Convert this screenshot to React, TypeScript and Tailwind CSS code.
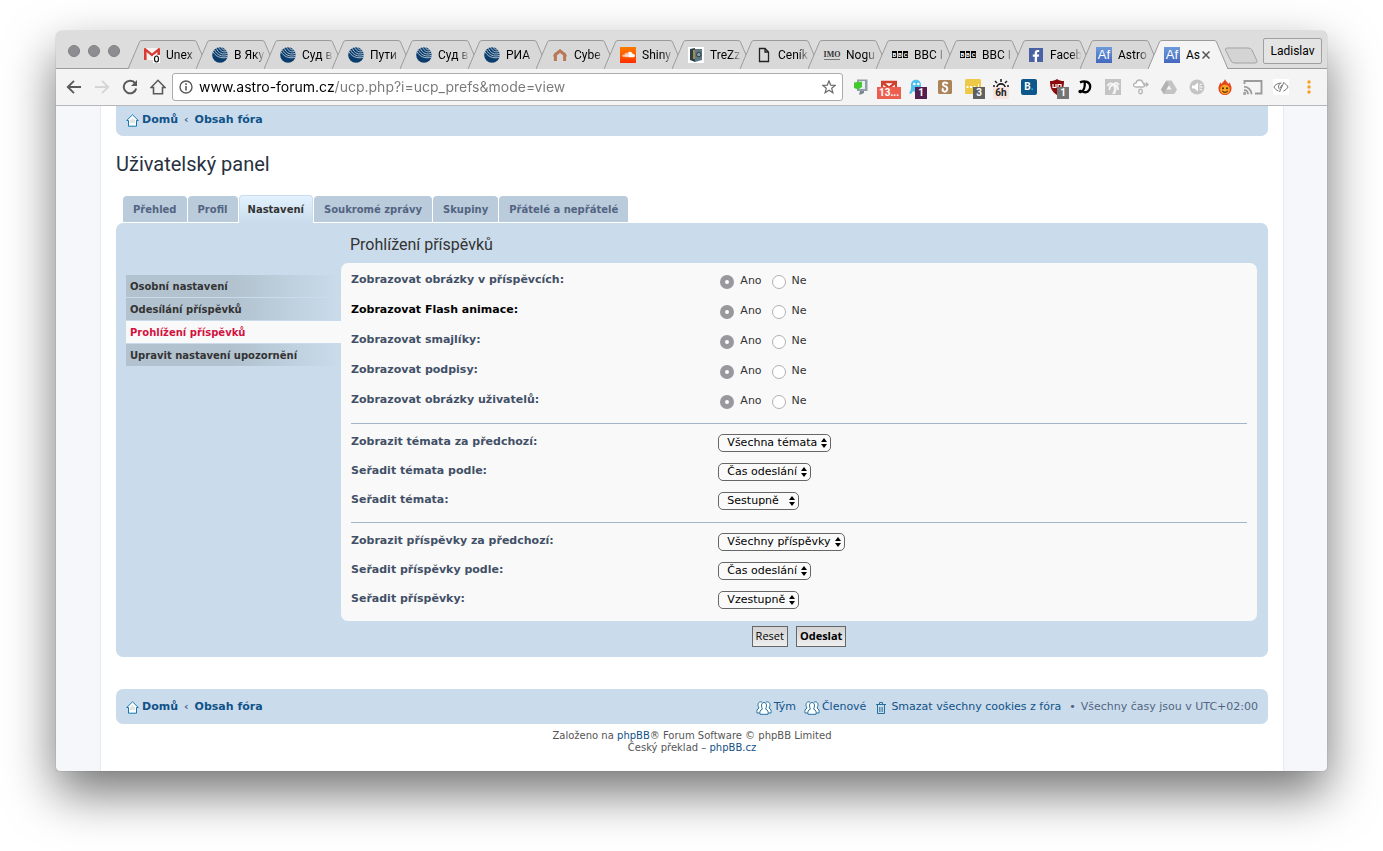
import { useState } from 'react';
import type { ReactNode } from 'react';
import clsx from 'clsx';
import { FaFacebookF, FaSoundcloud } from 'react-icons/fa';

// ---------- favicons ----------

const GmailIcon = () => (
  <svg viewBox="0 0 16 16" className="size-4">
    <rect x="0" y="1" width="16" height="12" rx="1" fill="#f4f1f1" />
    <path d="M0 2.2 L0 13 H2.6 V5 L8 9.6 L13.4 5 V13 H16 V2.2 C16 1 14.8 .8 14 1.4 L8 6.4 L2 1.4 C1.2 .8 0 1 0 2.2Z" fill="#d93a34" />
    <rect x="9" y="8" width="7" height="8" fill="#fff" />
    <ellipse cx="12.5" cy="12" rx="2" ry="3" fill="none" stroke="#111" strokeWidth="1.2" />
  </svg>
);

const RiaIcon = () => (
  <svg viewBox="0 0 16 16" className="size-4">
    <circle cx="8" cy="8" r="7.8" fill="#0a3c6e" />
    <g fill="none" stroke="#d8dde2" strokeWidth=".8">
      <path d="M1 4.6 C3 9 9 12.4 16 10" />
      <path d="M2.4 2.8 C5 8 10 10.4 16 8.2" />
      <path d="M4.2 1.2 C6.5 6.4 11 8.4 16 6" />
      <path d="M6.4 0 C8.4 4.6 12 6 15.4 4" />
      <path d="M9 0 C10 2.8 12.6 3.6 14.6 2.4" />
    </g>
  </svg>
);

const ArchIcon = () => (
  <svg viewBox="0 0 16 16" className="size-4">
    <path d="M3.4 14 V7.6 L8 4 L12.6 7.6 V14" fill="none" stroke="#b97856" strokeWidth="3" />
    <path d="M1.6 9.4 L8 3.8 L14.4 9.4" fill="none" stroke="#b97856" strokeWidth="2" />
  </svg>
);

const SoundcloudIcon = () => (
  <span className="flex size-4 items-center justify-center bg-linear-to-b from-[#ff7a00] to-[#ff2a00] text-white">
    <FaSoundcloud size={13} />
  </span>
);

const SafeIcon = () => (
  <svg viewBox="0 0 16 16" className="size-4">
    <rect width="16" height="16" fill="#fff" />
    <path d="M2 2 L7 1 V15 L2 13Z" fill="#2d4048" />
    <path d="M7 2 H14 V13 L7 15Z" fill="#5f7883" />
    <path d="M6 3 V12" stroke="#d7ad4c" strokeWidth="1.4" />
    <circle cx="10.8" cy="7.6" r="2.2" fill="#8ba5ae" stroke="#26363c" />
  </svg>
);

const FileIcon = () => (
  <svg viewBox="0 0 16 16" className="size-4">
    <path d="M3.5 1.5 H9 L12.5 5 V14.5 H3.5Z M9 1.5 V5 H12.5" fill="none" stroke="#222" strokeWidth="1.3" />
  </svg>
);

const ImoIcon = () => (
  <span className="flex w-4 justify-center border-b border-[#777] font-['Liberation_Serif',serif] text-[8px] leading-[9px] font-bold text-[#333]">
    IMO
  </span>
);

const BbcIcon = () => (
  <span className="flex w-4 gap-px">
    {['B', 'B', 'C'].map((letter, i) => (
      <span key={i} className="flex-1 bg-black text-center text-[6px] leading-[7px] font-bold text-white">
        {letter}
      </span>
    ))}
  </span>
);

const FacebookIcon = () => (
  <span className="flex size-[14px] items-end justify-end bg-[#4862a3] pr-px text-white">
    <FaFacebookF size={12} />
  </span>
);

const AfIcon = () => (
  <span className="flex size-4 items-center justify-center bg-linear-to-b from-[#6e9bdc] to-[#4467bd] font-['Liberation_Sans',sans-serif] text-[13px] leading-4 text-white">
    Af
  </span>
);

const browserTabs: { title: string; icon: ReactNode }[] = [
  { title: 'Unex', icon: <GmailIcon /> },
  { title: 'В Яку', icon: <RiaIcon /> },
  { title: 'Суд в', icon: <RiaIcon /> },
  { title: 'Пути', icon: <RiaIcon /> },
  { title: 'Суд в', icon: <RiaIcon /> },
  { title: 'РИА', icon: <RiaIcon /> },
  { title: 'Cybe', icon: <ArchIcon /> },
  { title: 'Shiny', icon: <SoundcloudIcon /> },
  { title: 'TreZz', icon: <SafeIcon /> },
  { title: 'Ceník', icon: <FileIcon /> },
  { title: 'Nogu', icon: <ImoIcon /> },
  { title: 'BBC I', icon: <BbcIcon /> },
  { title: 'BBC I', icon: <BbcIcon /> },
  { title: 'Faceb', icon: <FacebookIcon /> },
  { title: 'Astro', icon: <AfIcon /> },
  { title: 'As', icon: <AfIcon /> },
];

const BrowserTab = ({ title, icon, active }: { title: string; icon: ReactNode; active: boolean }) => (
  <button
    type="button"
    className={clsx('relative -ml-3 flex h-[29px] min-w-0 flex-1 items-center pr-[6px] pl-4 first:ml-0', active && 'z-10')}
  >
    <svg viewBox="0 0 80 29" preserveAspectRatio="none" className="absolute inset-0 h-full w-full">
      <path
        d="M0 29 L11.5 2 Q12 .5 14 .5 H66 Q68 .5 68.5 2 L80 29"
        fill={active ? '#f4f4f4' : '#d8d8d8'}
        stroke="#9b9b9b"
      />
    </svg>
    <span className="relative flex w-4 shrink-0 justify-center">{icon}</span>
    <span
      className={clsx(
        'relative ml-[6px] min-w-0 flex-1 text-left text-xs leading-4 whitespace-nowrap text-black',
        !active && 'mask-[linear-gradient(90deg,#000_56%,transparent_88%)]'
      )}
    >
      {title}
    </span>
    {active && (
      <svg viewBox="0 0 8 8" className="relative mr-3 size-2 shrink-0">
        <path d="M.5 .5 L7.5 7.5 M7.5 .5 L.5 7.5" stroke="#555" strokeWidth="1.5" />
      </svg>
    )}
  </button>
);

// ---------- toolbar ----------

const NavButton = ({ label, children }: { label: string; children: ReactNode }) => (
  <button type="button" aria-label={label} className="flex w-7 shrink-0 justify-center">
    {children}
  </button>
);

const Badge = ({ className, children }: { className: string; children: ReactNode }) => (
  <span className={clsx('absolute flex h-3 items-center justify-center text-[10px] leading-3 font-bold', className)}>{children}</span>
);

const extensions: { name: string; icon: ReactNode }[] = [
  {
    name: 'Downloader',
    icon: (
      <svg viewBox="0 0 16 16" className="size-4">
        <path d="M4 .5 H14.5 V12 H4Z" fill="#8f9ea8" />
        <path d="M6 2 H12 V10 H6Z" fill="#e9eef0" />
        <path d="M1 3.5 L9 2.5 V8 L5 10.5 L1 9Z" fill="#42c92f" />
        <path d="M7 12 H11 V14 L8 15.5 H6Z" fill="#7b8790" />
      </svg>
    ),
  },
  {
    name: 'Mail checker',
    icon: (
      <>
        <svg viewBox="0 0 16 16" className="size-4">
          <path d="M1 3 H15 V14 H1Z" fill="#fff" />
          <path d="M1 14 V3 H15 V14 M1 3 L8 9 L15 3" fill="none" stroke="#d0412f" strokeWidth="2.4" />
        </svg>
        <Badge className="top-2 -left-1 w-6 bg-[#ec5f50] text-white">13...</Badge>
      </>
    ),
  },
  {
    name: 'Ghost',
    icon: (
      <>
        <svg viewBox="0 0 16 16" className="size-4">
          <path d="M0 14 C2 12 2 9 2 6 C2 -1 12 -1 12 6 V14 L9 12 L7 14 L4 12 L2 15Z" fill="#4cc3ee" />
          <circle cx="5.3" cy="5" r="1.3" fill="#fff" />
          <circle cx="9.3" cy="5" r="1.3" fill="#fff" />
        </svg>
        <Badge className="top-2 left-[6px] w-3 bg-[#52204f] text-white">1</Badge>
      </>
    ),
  },
  {
    name: 'Script',
    icon: (
      <svg viewBox="0 0 16 16" className="size-4">
        <rect x="1" y="1" width="14" height="14" rx="1.5" fill="#ab8559" />
        <path d="M10.6 5 C9.6 2.8 6 3 6 5.4 C6 7.2 9 7 10 8.6 C11.2 11 9 13 7.2 12.6 C5.4 12.2 5 10.4 6.4 9.4" fill="none" stroke="#fff" strokeWidth="2" />
      </svg>
    ),
  },
  {
    name: 'Password',
    icon: (
      <>
        <svg viewBox="0 0 16 16" className="size-4">
          <rect width="16" height="15" rx="1.5" fill="#edc947" />
          <path d="M1.5 8 H3.5 M5 8 H7 M8.5 8 H10.5" stroke="#fff" strokeWidth="2" />
          <path d="M13.5 5 V9" stroke="#fff" />
        </svg>
        <Badge className="top-2 left-2 w-3 bg-[#606060] text-white">3</Badge>
      </>
    ),
  },
  {
    name: 'Weather',
    icon: (
      <>
        <svg viewBox="0 0 16 16" className="size-4">
          <path d="M3.8 9 A4.2 4.2 0 0 1 12.2 9" fill="none" stroke="#1b1b1b" strokeWidth="1.8" />
          <path d="M8 0 V3 M2 2 L4 4 M14 2 L12 4 M0 7 H2 M14 7 H16" stroke="#1b1b1b" strokeWidth="1.5" />
        </svg>
        <Badge className="top-2 left-0 w-4 bg-[#f8e4dd] text-[#222]">6h</Badge>
      </>
    ),
  },
  {
    name: 'Booking',
    icon: (
      <span className="flex size-4 items-center justify-center rounded-xs bg-[#0c588c] text-[10px] leading-4 font-bold text-white">
        B<span className="text-[#29b5ee]">.</span>
      </span>
    ),
  },
  {
    name: 'Blocker',
    icon: (
      <>
        <svg viewBox="0 0 16 16" className="size-4">
          <path d="M8 0 C10 1.5 12 2 15 2 C15 9 13 13 8 16 C3 13 1 9 1 2 C4 2 6 1.5 8 0Z" fill="#8b0b0b" />
          <path d="M4 5 V8.5 H7 V5 M9 11 V5.5 H12 V8.5 H9" fill="none" stroke="#fff" strokeWidth="1.2" />
        </svg>
        <Badge className="top-2 left-2 w-3 bg-[#757575] text-white">1</Badge>
      </>
    ),
  },
  {
    name: 'Dictionary',
    icon: (
      <svg viewBox="0 0 16 16" className="size-4">
        <path d="M3 3.4 C8 1 13.4 3 13.2 8 C13 12 9.4 14.2 6 12.8 M7.8 3.4 C8 8 7 12 4 13 C2 13.4 2 11.6 4 12 C5.5 12.6 7 13.5 9 13" fill="none" stroke="#000" strokeWidth="2.3" />
      </svg>
    ),
  },
  {
    name: 'Palm',
    icon: (
      <svg viewBox="0 0 16 16" className="size-4">
        <rect width="16" height="16" fill="#c4c4c4" />
        <path d="M7 15 C9.4 12 9.4 9 8 6 L11 6.6 C12 9 11.6 12 10 15Z" fill="#f6f6f6" />
        <path d="M8.6 6 C6.6 3.4 4 4 2.4 7 M8.6 6 C6 6 4.4 8 4.4 11 M8.6 5.6 C10 3 12.4 3.4 14 6 M9 6 C12 6 13 8 13 11" fill="none" stroke="#f6f6f6" strokeWidth="1.8" />
      </svg>
    ),
  },
  {
    name: 'Cloud',
    icon: (
      <svg viewBox="0 0 16 16" className="size-4" fill="none" stroke="#b4b4b4" strokeWidth="1.3">
        <path d="M3 8 C-.5 8 0 4 3 4 C4 0 9 0 10 4 C12 4 12.5 8 10 8Z" fill="#fff" />
        <path d="M10 5.5 H15 M13 3.5 L15 5.5 L13 7.5" />
        <ellipse cx="7.5" cy="12.5" rx="1.8" ry="2.3" />
      </svg>
    ),
  },
  {
    name: 'Drive',
    icon: (
      <svg viewBox="0 0 16 16" className="size-4">
        <path d="M5.4 1.5 H10.6 L16 10.5 L13.4 15 H2.6 L0 10.5Z" fill="#c3c3c3" />
        <path d="M5.4 1.5 L8 6 L2.6 15 L0 10.5Z" fill="#b3b3b3" />
        <path d="M8 6.2 L10.6 10.5 H5.4Z" fill="#f4f4f4" />
      </svg>
    ),
  },
  {
    name: 'Sound',
    icon: (
      <svg viewBox="0 0 16 16" className="size-4">
        <circle cx="8" cy="8" r="7.5" fill="#c5c5c5" />
        <path d="M3 6.5 H5.5 L9 3.5 V12.5 L5.5 9.5 H3Z" fill="#fff" />
        <path d="M10.5 6 L13 5 M10.5 8 H13.5 M10.5 10 L13 11" stroke="#fff" />
      </svg>
    ),
  },
  {
    name: 'Flame',
    icon: (
      <svg viewBox="0 0 16 16" className="size-4">
        <path d="M8 0 C9 3 11 3 11 5 L13 3.5 C13 6 15 7 14.5 10 C14 14 11 16 8 16 C5 16 2 14 1.5 10 C1 7 3 6 3 3.5 L5 5 C5 3 7.5 2.5 8 0Z" fill="#e5461d" />
        <circle cx="8" cy="10.5" r="4.8" fill="#f9a825" />
        <circle cx="6" cy="9.3" r="1" fill="#4a2508" />
        <circle cx="10" cy="9.3" r="1" fill="#4a2508" />
        <path d="M5.3 11.7 C6.5 13.8 9.5 13.8 10.7 11.7" fill="none" stroke="#6b2c08" strokeWidth="1.2" />
      </svg>
    ),
  },
  {
    name: 'Cast',
    icon: (
      <svg viewBox="0 0 20 16" className="h-4 w-5 shrink-0" fill="none" stroke="#9b9b9b" strokeWidth="1.9">
        <path d="M1.5 5 V2 H18.5 V14.5 H12" />
        <path d="M1 7.6 C5 7.6 8.5 11 8.5 15.2 M1 11 C3.5 11 5 12.8 5 15.2" />
        <circle cx="1.6" cy="14.4" r=".6" />
      </svg>
    ),
  },
  {
    name: 'Hidden code',
    icon: (
      <svg viewBox="0 0 16 16" className="size-4" fill="none" stroke="#777" strokeWidth="1">
        <rect width="16" height="16" fill="#fff" stroke="none" />
        <path d="M7.6 4 C4 4.4 1.6 6.3 1 8 C1.8 9.8 3.4 11.2 5.4 12 M11.4 4.5 C13 5.3 14.4 6.4 15 8 C14.2 9.6 13 10.8 10.4 12 M11 3 L6.5 13 M8.4 4 C5 5 4.8 8.6 6.8 10.6 M9 6 L7 9" />
      </svg>
    ),
  },
  {
    name: 'Menu',
    icon: (
      <svg viewBox="0 0 16 16" className="size-4" fill="#f5a11d">
        <circle cx="8" cy="3" r="1.7" />
        <circle cx="8" cy="8" r="1.7" />
        <circle cx="8" cy="13" r="1.7" />
      </svg>
    ),
  },
];

const Browser = ({ children }: { children: ReactNode }) => {
  const [address, setAddress] = useState('www.astro-forum.cz/ucp.php?i=ucp_prefs&mode=view');

  return (
    <div className="overflow-hidden rounded-t-md rounded-b bg-[#f5f7fa] shadow-[0_0_1px_rgba(0,0,0,0.5),0_22px_50px_rgba(0,0,0,0.55)]">
      <div className="font-[Roboto,sans-serif]">
        <div className="flex h-[38px] items-end border-b border-[#9b9b9b] bg-[#dddddd]">
          <div className="flex w-[72px] shrink-0 gap-2 self-center pt-[2px] pl-3">
            <span className="size-3 rounded-full border border-[#808084] bg-[#8e8e92]" />
            <span className="size-3 rounded-full border border-[#808084] bg-[#8e8e92]" />
            <span className="size-3 rounded-full border border-[#808084] bg-[#8e8e92]" />
          </div>
          <div className="-mb-px flex min-w-0 flex-1">
            {browserTabs.map((tab, i) => (
              <BrowserTab key={i} title={tab.title} icon={tab.icon} active={i === browserTabs.length - 1} />
            ))}
          </div>
          <button type="button" aria-label="New tab" className="-ml-1 w-[35px] shrink-0 pb-1">
            <svg viewBox="0 0 35 17" className="h-[17px] w-[35px]">
              <path d="M3 1 H24 Q27 1 28 3 L33 14 Q33.5 16 31 16 H11 Q8 16 7 14 L1.5 3 Q1 1 3 1Z" fill="#d4d4d4" stroke="#a3a3a3" />
            </svg>
          </button>
          <button
            type="button"
            className="mr-[5px] mb-1 ml-1 h-[26px] w-[59px] shrink-0 self-end rounded-xs border border-[#a0a0a0] bg-[#e4e4e4] text-xs text-black"
          >
            Ladislav
          </button>
        </div>

        <div className="flex h-[37px] items-center border-b border-[#b8b8bc] bg-[#f4f4f4] pr-1 pl-1">
          <NavButton label="Back">
            <svg viewBox="0 0 16 16" className="size-4" fill="none" stroke="#5a5a5a" strokeWidth="1.9">
              <path d="M15 8 H2 M8 1.8 L1.8 8 L8 14.2" />
            </svg>
          </NavButton>
          <NavButton label="Forward">
            <svg viewBox="0 0 16 16" className="size-4" fill="none" stroke="#d5d5d5" strokeWidth="1.9">
              <path d="M1 8 H14 M8 1.8 L14.2 8 L8 14.2" />
            </svg>
          </NavButton>
          <NavButton label="Reload">
            <svg viewBox="0 0 16 16" className="size-4">
              <path d="M13.2 4.3 A6.3 6.3 0 1 0 14.2 9.5" fill="none" stroke="#5a5a5a" strokeWidth="2" />
              <path d="M15 1 V7 H9Z" fill="#5a5a5a" />
            </svg>
          </NavButton>
          <NavButton label="Home">
            <svg viewBox="0 0 16 16" className="size-4" fill="none" stroke="#5a5a5a" strokeWidth="1.6">
              <path d="M3.5 14.8 V8.5 H1 L8 1.3 L15 8.5 H12.5 V14.8Z" />
            </svg>
          </NavButton>
          <div className="flex h-7 min-w-0 flex-1 items-center rounded-[3px] border border-[#ababab] bg-white px-[6px]">
            <svg viewBox="0 0 14 14" className="size-[14px] shrink-0" fill="none" stroke="#5a5a5a">
              <circle cx="7" cy="7" r="6" strokeWidth="1.4" />
              <path d="M7 6 V10.5 M7 3.3 V5" strokeWidth="1.6" />
            </svg>
            <input
              type="text"
              aria-label="Address"
              value={address}
              onChange={(e) => setAddress(e.target.value)}
              className="ml-[6px] min-w-0 flex-1 bg-[linear-gradient(90deg,#000_135px,#777_135px)] bg-clip-text font-[Inter,sans-serif] text-sm leading-5 text-transparent outline-none"
            />
            <svg viewBox="0 0 14 14" className="size-[14px] shrink-0" fill="none" stroke="#6a6a6a" strokeWidth="1.2">
              <path d="M7 .9 L8.7 5.1 L13.2 5.4 L9.7 8.3 L10.9 12.8 L7 10.3 L3.1 12.8 L4.3 8.3 L.8 5.4 L5.3 5.1Z" />
            </svg>
          </div>
          <div className="ml-1 flex shrink-0">
            {extensions.map((ext) => (
              <button key={ext.name} type="button" aria-label={ext.name} className="flex w-7 justify-center">
                <span className="relative flex size-4 justify-center">{ext.icon}</span>
              </button>
            ))}
          </div>
        </div>
      </div>
      {children}
    </div>
  );
};

// ---------- forum ----------

const HomeIcon = () => (
  <svg viewBox="0 0 13 13" className="size-[13px]">
    <path d="M6.5 .8 L12.3 6.5 H10.5 V12.2 H2.5 V6.5 H.7Z" fill="#fff" stroke="#1079b2" />
    <path d="M6.5 4 L9 6.5 V9 H4 V6.5Z" fill="#e3e3e3" />
  </svg>
);

const GroupIcon = () => (
  <svg viewBox="0 0 16 14" className="h-[14px] w-4 shrink-0" fill="#fff" stroke="#25719e">
    <path d="M10 1 C14 0 15 4 13 7 C15 8 15.5 10 15 12 H10" />
    <path d="M6 1 C2 0 1 4 3 7 C1 8 .5 10 1 12 H6" />
    <path d="M8 1.5 C5 1.5 5 6 6.5 8 C4 9 3.5 11 4 13.3 H12 C12.5 11 12 9 9.5 8 C11 6 11 1.5 8 1.5Z" />
  </svg>
);

const TrashIcon = () => (
  <svg viewBox="0 0 10 12" className="h-3 w-[10px] shrink-0" fill="none" stroke="#25719e">
    <path d="M0 2.5 H10 M3.5 2.5 V.5 H6.5 V2.5 M1.5 3 V11.5 H8.5 V3" />
    <path d="M3.5 5 V10 M5 5 V10 M6.5 5 V10" strokeWidth=".7" />
  </svg>
);

const Breadcrumbs = () => (
  <nav className="flex items-center font-bold text-[#105289]">
    <a href="#home" className="flex items-center gap-[3px] hover:underline">
      <HomeIcon />
      Domů
    </a>
    <span className="px-[6px] text-[#536482]">‹</span>
    <a href="#forum" className="hover:underline">
      Obsah fóra
    </a>
  </nav>
);

const panelTabs = ['Přehled', 'Profil', 'Nastavení', 'Soukromé zprávy', 'Skupiny', 'Přátelé a nepřátelé'];
const sideLinks = ['Osobní nastavení', 'Odesílání příspěvků', 'Prohlížení příspěvků', 'Upravit nastavení upozornění'];

const radioSettings = [
  { id: 'images', label: 'Zobrazovat obrázky v příspěvcích:' },
  { id: 'flash', label: 'Zobrazovat Flash animace:' },
  { id: 'smilies', label: 'Zobrazovat smajlíky:' },
  { id: 'sigs', label: 'Zobrazovat podpisy:' },
  { id: 'avatars', label: 'Zobrazovat obrázky uživatelů:' },
];

const topicSettings = [
  { id: 'topic_st', label: 'Zobrazit témata za předchozí:', options: ['Všechna témata'], value: 'Všechna témata' },
  { id: 'topic_sk', label: 'Seřadit témata podle:', options: ['Čas odeslání'], value: 'Čas odeslání' },
  { id: 'topic_sd', label: 'Seřadit témata:', options: ['Vzestupně', 'Sestupně'], value: 'Sestupně' },
];

const postSettings = [
  { id: 'post_st', label: 'Zobrazit příspěvky za předchozí:', options: ['Všechny příspěvky'], value: 'Všechny příspěvky' },
  { id: 'post_sk', label: 'Seřadit příspěvky podle:', options: ['Čas odeslání'], value: 'Čas odeslání' },
  { id: 'post_sd', label: 'Seřadit příspěvky:', options: ['Vzestupně', 'Sestupně'], value: 'Vzestupně' },
];

const Radio = ({ name, value, label, checked }: { name: string; value: string; label: string; checked?: boolean }) => (
  <label className="flex items-end gap-[6px]">
    <input
      type="radio"
      name={name}
      value={value}
      defaultChecked={checked}
      className="size-[14px] appearance-none rounded-full border border-[#b0b0b0] bg-white checked:border-5 checked:border-[#98989d]"
    />
    {label}
  </label>
);

const SelectRow = ({ id, label, options, value }: { id: string; label: string; options: string[]; value: string }) => (
  <div className="flex h-[29px] items-start pt-[5px]">
    <label htmlFor={id} className="w-[41%] leading-4 font-bold text-[#425067]">
      {label}
    </label>
    <span className="relative">
      <select
        id={id}
        defaultValue={value}
        className="block h-[18px] appearance-none rounded-[5px] border border-[#666] bg-[#fafafa] pr-[13px] pl-2 leading-4 text-black"
      >
        {options.map((option) => (
          <option key={option}>{option}</option>
        ))}
      </select>
      <svg viewBox="0 0 6 10" className="pointer-events-none absolute top-1 right-1 h-[10px] w-[6px]">
        <path d="M3 0 L6 4 H0Z M3 10 L6 6 H0Z" fill="#000" />
      </svg>
    </span>
  </div>
);

const ControlPanel = () => (
  <div>
    <ul className="mt-[19px] flex h-7 gap-px pl-[7px] text-[10px] font-bold">
      {panelTabs.map((tab) => (
        <li key={tab}>
          <a
            href="#tab"
            className={clsx(
              'flex items-center rounded-t',
              tab === 'Nastavení'
                ? 'h-7 border-x border-t border-[#cadceb] bg-linear-to-b from-[#e2f2ff] to-[#cadceb] px-2 text-[#333]'
                : 'mt-px h-[26px] bg-[#bacbdb] px-[10px] text-[#536482]'
            )}
          >
            {tab}
          </a>
        </li>
      ))}
    </ul>

    <div className="flex rounded-[7px] bg-[#cadceb] pr-[11px] pb-[10px] pl-[10px]">
      <ul className="flex w-[215px] shrink-0 flex-col gap-px pt-[52px] text-[10px] font-bold">
        {sideLinks.map((link) => (
          <li key={link}>
            <a
              href="#section"
              className={clsx(
                'block h-[22px] pl-1 leading-6',
                link === 'Prohlížení příspěvků'
                  ? 'bg-[#f9f9f9] text-[#d31141]'
                  : 'bg-linear-to-r from-[#b2c2cf] from-50% to-[#cadceb] text-[#333]'
              )}
            >
              {link}
            </a>
          </li>
        ))}
      </ul>

      <form className="min-w-0 flex-1 pt-3" onSubmit={(e) => e.preventDefault()}>
        <h3 className="pl-[9px] font-[Roboto,sans-serif] text-base leading-5 text-[#333]">Prohlížení příspěvků</h3>

        <div className="mt-2 rounded-[7px] bg-[#f9f9f9] px-[10px] pt-px pb-[6px]">
          {radioSettings.map((setting) => (
            <div key={setting.id} role="radiogroup" aria-labelledby={setting.id} className="flex h-[30px] items-start">
              <span
                id={setting.id}
                className={clsx('w-[41%] pt-2 leading-4 font-bold', setting.id === 'flash' ? 'text-black' : 'text-[#425067]')}
              >
                {setting.label}
              </span>
              <span className="flex gap-[10px] pt-[9px] pl-[2px] leading-4 text-[#333]">
                <Radio name={setting.id} value="1" label="Ano" checked />
                <Radio name={setting.id} value="0" label="Ne" />
              </span>
            </div>
          ))}
          <hr className="mt-[9px] mb-[5px] border-[#a4b5c8]" />
          {topicSettings.map((setting) => (
            <SelectRow key={setting.id} {...setting} />
          ))}
          <hr className="mt-[6px] mb-[5px] border-[#a4b5c8]" />
          {postSettings.map((setting) => (
            <SelectRow key={setting.id} {...setting} />
          ))}
        </div>

        <div className="mt-[5px] flex justify-center gap-2 font-['Open_Sans',sans-serif]">
          <button type="reset" className="h-[21px] border border-[#666] bg-linear-to-b from-[#d2d2d2] to-[#efefef] px-[3px] text-black">
            Reset
          </button>
          <button type="submit" className="h-[21px] border border-[#666] bg-linear-to-b from-[#d2d2d2] to-[#efefef] px-[3px] font-bold text-black">
            Odeslat
          </button>
        </div>
      </form>
    </div>
  </div>
);

const App = () => {
  return (
    <div className="bg-white px-14 pt-[31px] pb-20">
      <Browser>
        <div className="mr-[43px] ml-11 border-x border-[#e6e9ed] bg-white px-[15px] pb-[17px] font-['DejaVu_Sans',sans-serif] text-[11px]">
          <div className="flex h-[30px] items-center rounded-b-[7px] bg-[#cadceb] px-[10px] pb-[2px]">
            <Breadcrumbs />
          </div>

          <h2 className="mt-4 font-[Roboto,sans-serif] text-xl leading-6 text-[#28313f]">Uživatelský panel</h2>

          <ControlPanel />

          <footer>
            <div className="mt-8 flex h-[35px] items-center justify-between rounded-[7px] bg-[#cadceb] px-[10px] pt-[2px]">
              <Breadcrumbs />
              <div className="flex items-center gap-2 text-[#105289]">
                <a href="#team" className="flex items-center gap-[2px] hover:underline">
                  <GroupIcon />
                  Tým
                </a>
                <a href="#members" className="flex items-center gap-[2px] hover:underline">
                  <GroupIcon />
                  Členové
                </a>
                <a href="#cookies" className="flex items-center gap-[5px] pl-[2px] hover:underline">
                  <TrashIcon />
                  Smazat všechny cookies z fóra
                </a>
                <span className="flex gap-[5px] text-[#536482]">
                  <span>•</span>
                  <span>Všechny časy jsou v UTC+02:00</span>
                </span>
              </div>
            </div>
            <div className="mt-[6px] text-center text-[10px] leading-3 text-[#555]">
              <p>
                Založeno na{' '}
                <a href="#phpbb" className="text-[#105289]">
                  phpBB
                </a>
                ® Forum Software © phpBB Limited
              </p>
              <p>
                Český překlad –{' '}
                <a href="#phpbbcz" className="text-[#105289]">
                  phpBB.cz
                </a>
              </p>
            </div>
          </footer>
        </div>
      </Browser>
    </div>
  );
};

export default App;
